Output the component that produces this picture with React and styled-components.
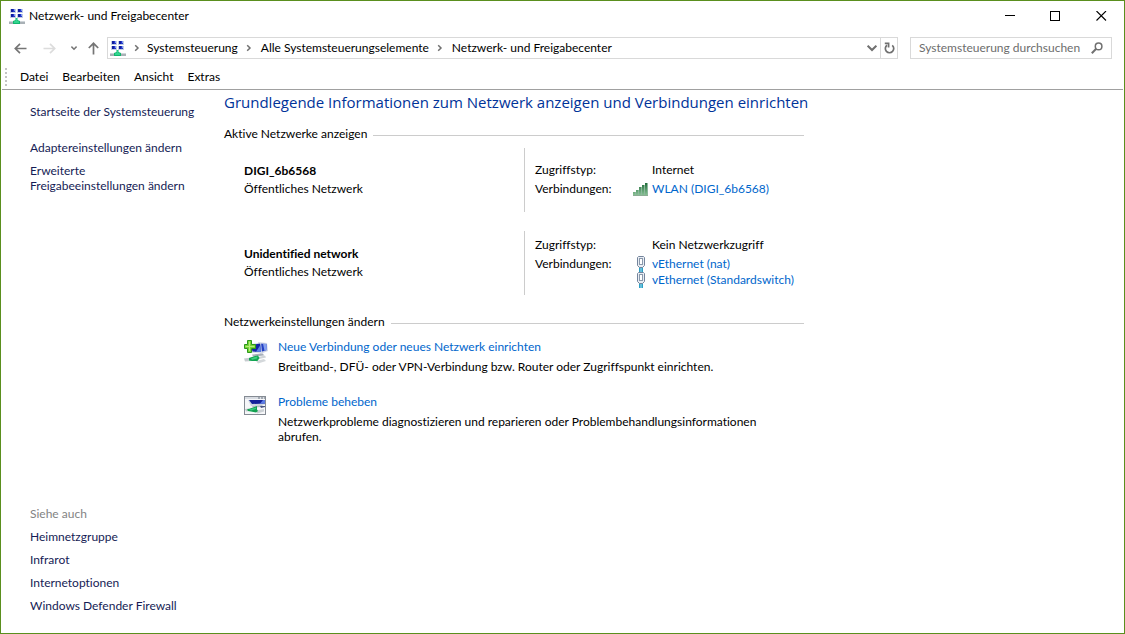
import React from 'react';
import styled, { createGlobalStyle } from 'styled-components';

const GlobalStyle = createGlobalStyle`
  *, *::before, *::after { box-sizing: border-box; }
  body {
    margin: 0;
    background: #fff;
    color: #000;
    font: 12px/16px "Segoe UI", Lato, sans-serif;
    font-variant-ligatures: none;
  }
  button, input { font: inherit; color: inherit; }
  button { border: 0; padding: 0; background: none; }
  h1, h2, h3, p, ul, dl, dd { margin: 0; padding: 0; }
  ul { list-style: none; }
  svg { display: block; flex: none; }
`;

const Window = styled.div`
  min-height: 100vh;
  display: flex;
  flex-direction: column;
  border: 1px solid #5a8f1e;
`;

const TitleBar = styled.header`
  display: flex;
  align-items: center;
  height: 30px;
  padding-left: 8px;
`;

const WindowTitle = styled.span`
  flex: 1;
  padding-left: 4px;
`;

const CaptionButton = styled.button`
  width: 46px;
  height: 28px;
  display: flex;
  align-items: center;
  justify-content: center;
`;

const NavBar = styled.div`
  display: flex;
  align-items: center;
  height: 34px;
  padding: 0 12px 0 8px;
`;

const NavButton = styled.button`
  width: ${(p) => p.$width}px;
  height: 22px;
  display: flex;
  align-items: center;
  justify-content: center;
  color: ${(p) => (p.disabled ? '#dcdcdc' : '#757575')};
`;

const AddressBar = styled.nav`
  flex: 1;
  display: flex;
  align-items: center;
  height: 22px;
  padding-left: 2px;
  border: 1px solid #d9d9d9;
`;

const Separator = styled.span`
  display: flex;
  justify-content: center;
  width: ${(p) => p.$width || 23}px;
  color: #707070;
`;

const Spacer = styled.span`
  flex: 1;
`;

const AddressButton = styled.button`
  width: 17px;
  height: 20px;
  display: flex;
  align-items: center;
  justify-content: center;
  color: #707070;
  border-left: ${(p) => (p.$divided ? '1px solid #d9d9d9' : '0')};
`;

const SearchBox = styled.label`
  display: flex;
  align-items: center;
  width: 202px;
  height: 22px;
  margin-left: 12px;
  padding: 0 8px;
  border: 1px solid #d9d9d9;
  color: #707070;
`;

const SearchInput = styled.input`
  flex: 1;
  min-width: 0;
  padding: 0;
  border: 0;
  outline: 0;
  background: none;
  &::placeholder { color: #6d6d6d; opacity: 1; }
`;

const MenuBar = styled.div`
  display: flex;
  align-items: center;
  height: 25px;
  margin: 0 1px;
  padding-left: 3px;
  border-bottom: 1px solid #a0a0a0;
`;

const Grip = styled.span`
  width: 2px;
  height: 18px;
  margin-right: 6px;
  background: repeating-linear-gradient(#c4c4c4 0 2px, #fff 2px 4px);
`;

const MenuButton = styled.button`
  padding: 0 7px;
`;

const Content = styled.div`
  flex: 1;
  display: flex;
`;

const Sidebar = styled.aside`
  width: 223px;
  flex: none;
  display: flex;
  flex-direction: column;
  justify-content: space-between;
  padding: 14px 24px 20px 29px;
  line-height: 15px;
`;

const LinkList = styled.ul`
  display: flex;
  flex-direction: column;
  gap: 8px;
`;

const SideItem = styled.li`
  margin-bottom: ${(p) => (p.$spaced ? '13px' : '0')};
`;

const SideLink = styled.a`
  color: #151c55;
  text-decoration: none;
`;

const SideCaption = styled.h3`
  font-size: 12px;
  font-weight: 400;
  color: #838383;
  margin-bottom: 8px;
`;

const Main = styled.main`
  flex: 1;
  max-width: 580px;
  padding-top: 2px;
`;

const Heading = styled.h1`
  font-family: "Segoe UI", "Open Sans", sans-serif;
  font-size: 15px;
  line-height: 20px;
  font-weight: 400;
  color: #003399;
  white-space: nowrap;
`;

const Section = styled.section`
  margin-top: ${(p) => p.$gap}px;
`;

const SectionTitle = styled.h2`
  display: flex;
  align-items: center;
  gap: 6px;
  font-size: 12px;
  font-weight: 400;
  &::after {
    content: "";
    flex: 1;
    height: 1px;
    margin-top: 2px;
    background: #ccc;
  }
`;

const Networks = styled.div`
  display: flex;
  flex-direction: column;
  gap: 19px;
  margin-top: 6px;
`;

const Network = styled.article`
  display: flex;
  min-height: 64px;
`;

const Identity = styled.div`
  width: 300px;
  padding-left: 20px;
  display: flex;
  flex-direction: column;
  justify-content: center;
  line-height: 18px;
`;

const NetworkName = styled.h3`
  font-size: 12px;
  font-weight: 700;
`;

const Details = styled.dl`
  flex: 1;
  display: grid;
  grid-template-columns: 98px 1fr;
  row-gap: 3px;
  align-content: center;
  padding: 0 0 1px 10px;
  border-left: 1px solid #ccc;
`;

const AccessValue = styled.dd`
  padding-left: 19px;
`;

const Connection = styled.div`
  display: flex;
  align-items: center;
  gap: 3px;
  white-space: nowrap;
`;

const ActionLink = styled.a`
  color: #0066cc;
  text-decoration: none;
`;

const Tasks = styled.ul`
  display: flex;
  flex-direction: column;
  gap: 16px;
  margin-top: 9px;
`;

const Task = styled.li`
  display: flex;
  gap: 10px;
  padding-left: 19px;
  padding-right: 20px;
`;

const TaskText = styled.p`
  margin-top: 4px;
  line-height: 15px;
  padding-bottom: 4px;
`;

const Monitor = ({ x, y }) => (
  <g>
    <rect x={x} y={y} width="6" height="4" fill="#c3cfe2" />
    <rect x={x + 1} y={y} width="4" height="3" fill="#2438c8" />
    <rect x={x + 1} y={y} width="2" height="3" fill="#0f1da0" />
    <rect x={x + 4} y={y} width="1" height="2" fill="#7f9af0" />
  </g>
);

const NetworkIcon = () => (
  <svg width="16" height="17" viewBox="0 0 16 17" aria-hidden="true">
    <Monitor x={1} y={1} />
    <Monitor x={8} y={1} />
    <Monitor x={1} y={6} />
    <Monitor x={8} y={6} />
    <rect x="0" y="13" width="16" height="3" fill="#a9b1b6" />
    <rect x="0" y="13" width="16" height="1" fill="#cfd5d9" />
    <path d="M6.5 10H8.5V12L11 13V16H4V13L6.5 12Z" fill="#14b56e" />
    <path d="M7 10.5H8V12.5L10 13.5V15H5V13.5L7 12.5Z" fill="#30d68e" />
  </svg>
);

const ArrowIcon = ({ rotate }) => (
  <svg width="13" height="13" viewBox="0 0 13 13" fill="none" stroke="currentColor" strokeWidth="1.7" aria-hidden="true">
    <path transform={`rotate(${rotate} 6.5 6.5)`} d="M12.5 6.5H1.5M6 1.8L1.3 6.5L6 11.2" />
  </svg>
);

const ChevronDown = ({ size = 6, stroke = 1.5 }) => (
  <svg width={size} height={size} viewBox="0 0 6 6" fill="none" stroke="currentColor" strokeWidth={stroke} aria-hidden="true">
    <path d="M0.4 1.6L3 4.2L5.6 1.6" />
  </svg>
);

const ChevronRight = () => (
  <svg width="6" height="8" viewBox="0 0 6 8" fill="none" stroke="currentColor" strokeWidth="1.5" aria-hidden="true">
    <path d="M1.2 1.2L4 4L1.2 6.8" />
  </svg>
);

const RefreshIcon = () => (
  <svg width="11" height="12" viewBox="0 0 11 12" fill="none" stroke="currentColor" strokeWidth="1.7" aria-hidden="true">
    <path d="M3 3.2A4.2 4.2 0 1 0 8.2 3.3M0.8 1.4H4.6V5.4" />
  </svg>
);

const SearchIcon = () => (
  <svg width="12" height="12" viewBox="0 0 12 12" fill="none" stroke="currentColor" aria-hidden="true">
    <circle cx="7.6" cy="4.4" r="3.3" strokeWidth="1.5" />
    <path d="M5.2 6.8L0.8 11.2" strokeWidth="2" />
  </svg>
);

const MinimizeIcon = () => (
  <svg width="11" height="11" viewBox="0 0 11 11" aria-hidden="true">
    <path d="M1 4.5H11" stroke="#000" />
  </svg>
);

const MaximizeIcon = () => (
  <svg width="11" height="11" viewBox="0 0 11 11" aria-hidden="true">
    <rect x="0.5" y="0.5" width="9" height="9" fill="none" stroke="#000" />
  </svg>
);

const CloseIcon = () => (
  <svg width="11" height="11" viewBox="0 0 11 11" aria-hidden="true">
    <path d="M0.5 0L10 9.5M10 0L0.5 9.5" stroke="#000" strokeWidth="1.1" />
  </svg>
);

const bars = [
  { x: 0, h: 3 },
  { x: 3, h: 5 },
  { x: 6, h: 8 },
  { x: 9, h: 10 },
  { x: 12, h: 12 },
];

const SignalIcon = () => (
  <svg width="16" height="13" viewBox="0 0 16 13" aria-hidden="true">
    <defs>
      <linearGradient id="signal" x1="0" y1="0" x2="0" y2="13" gradientUnits="userSpaceOnUse">
        <stop offset="0" stopColor="#1f6b3a" />
        <stop offset="1" stopColor="#8fc79a" />
      </linearGradient>
    </defs>
    {bars.map((b) => (
      <g key={b.x}>
        <rect x={b.x} y={12 - b.h} width="3" height={b.h} fill="#2f7d4c" opacity="0.55" />
        <rect x={b.x} y={12 - b.h} width="2" height={b.h} fill="url(#signal)" />
      </g>
    ))}
    <path d="M0 12.5H15" stroke="#5b8a66" opacity="0.7" />
  </svg>
);

const EthernetIcon = () => (
  <svg width="16" height="16" viewBox="0 0 16 16" aria-hidden="true">
    <rect x="6" y="11" width="4" height="5" fill="#2d9fc4" />
    <rect x="7.5" y="12" width="1" height="4" fill="#9be0f2" />
    <path d="M4.5 1.5L5.5 0.5H10.5L11.5 1.5V9.5L9.5 11.5H6.5L4.5 9.5Z" fill="#e8edf3" stroke="#74849c" />
    <rect x="6.5" y="2.5" width="3" height="6" fill="#fff" stroke="#8b99ac" />
  </svg>
);

const NewConnectionIcon = () => (
  <svg width="25" height="26" viewBox="0 0 25 26" aria-hidden="true">
    <path d="M15 3L24 4L25 12L17 15Z" fill="#d0d6e4" />
    <path d="M16 4.5L23.5 5L24 11L17.5 13Z" fill="#2340c4" />
    <path d="M20 4.8L23.5 5L24 11L21.5 11.8Z" fill="#86a0ee" />
    <path d="M7 5L18 3.5L19 14.5L9 14Z" fill="#d9dfea" />
    <path d="M8 6L17.2 4.5L18 13L9.5 12.6Z" fill="#1426a8" />
    <path d="M13 12.8L17.4 6L18 13Z" fill="#5c80e4" />
    <path d="M9 15.5L20 14.5L21 16.5L10 17.5Z" fill="#a8b0ba" />
    <path d="M1 19.5L9 18.5V22L2 22.5Z" fill="#c6cccf" />
    <path d="M15 18L22 16.5L23 18.5L16 20Z" fill="#cfd4d7" />
    <path d="M13 22L21 20L23 22L15 24.5Z" fill="#d4d8db" />
    <path d="M6 19L12 17L15 16.5L16.5 19L14.5 22L9 22L6 21.5Z" fill="#12a552" />
    <path d="M8 19.5L12 18L14.5 17.5L14 19.5L9 20.8Z" fill="#42cf82" />
    <path d="M4.5 1.5H8.5V5.5H12.5V9.5H8.5V13.5H4.5V9.5H1.5V5.5H4.5Z" fill="#79d336" stroke="#2c981c" />
    <path d="M6.5 2.5V12M2.5 7.5H11.5" stroke="#b3f07a" />
  </svg>
);

const TroubleshootIcon = () => (
  <svg width="25" height="26" viewBox="0 0 25 26" aria-hidden="true">
    <rect x="1.5" y="2.5" width="21" height="18" fill="#f6f7f9" stroke="#858b93" />
    <rect x="2" y="3" width="20" height="2" fill="#d8dce2" />
    <path d="M15 4H22" stroke="#6d7682" strokeDasharray="2 1" />
    <path d="M5 6H22V10.5L8 12Z" fill="#ccd3e0" />
    <path d="M6 6H22V9.5L9 10Z" fill="#14219a" />
    <path d="M17 9.7L20 6H22V9.5Z" fill="#5c7ce4" />
    <path d="M9 12L20 11L18 13L10 13.5Z" fill="#b3bac4" />
    <path d="M17 12H22V13L18 14Z" fill="#4a5580" />
    <path d="M2 15L6 14.5V17L3 17.5Z" fill="#c2c8cc" />
    <path d="M13 16.5L21 15V17.5L14 19.5Z" fill="#cbd0d4" />
    <path d="M4 15.5L10 13.5L14 12V15.5L15 17L13 18.5L8 17.5L5 17Z" fill="#12a04f" />
    <path d="M6 15.5L13 13.5V15L8 16.5Z" fill="#3ccb80" />
  </svg>
);

const crumbs = ['Systemsteuerung', 'Alle Systemsteuerungselemente', 'Netzwerk- und Freigabecenter'];
const menus = ['Datei', 'Bearbeiten', 'Ansicht', 'Extras'];
const sideTasks = ['Startseite der Systemsteuerung', 'Adaptereinstellungen ändern', 'Erweiterte Freigabeeinstellungen ändern'];
const seeAlso = ['Heimnetzgruppe', 'Infrarot', 'Internetoptionen', 'Windows Defender Firewall'];
const networks = [
  {
    name: 'DIGI_6b6568',
    type: 'Öffentliches Netzwerk',
    access: 'Internet',
    Icon: SignalIcon,
    connections: ['WLAN (DIGI_6b6568)'],
  },
  {
    name: 'Unidentified network',
    type: 'Öffentliches Netzwerk',
    access: 'Kein Netzwerkzugriff',
    Icon: EthernetIcon,
    connections: ['vEthernet (nat)', 'vEthernet (Standardswitch)'],
  },
];
const tasks = [
  {
    title: 'Neue Verbindung oder neues Netzwerk einrichten',
    text: 'Breitband-, DFÜ- oder VPN-Verbindung bzw. Router oder Zugriffspunkt einrichten.',
    Icon: NewConnectionIcon,
  },
  {
    title: 'Probleme beheben',
    text: 'Netzwerkprobleme diagnostizieren und reparieren oder Problembehandlungsinformationen abrufen.',
    Icon: TroubleshootIcon,
  },
];

export default function App() {
  return (
    <>
      <GlobalStyle />
      <Window>
        <TitleBar>
          <NetworkIcon />
          <WindowTitle>Netzwerk- und Freigabecenter</WindowTitle>
          <CaptionButton aria-label="Minimieren"><MinimizeIcon /></CaptionButton>
          <CaptionButton aria-label="Maximieren"><MaximizeIcon /></CaptionButton>
          <CaptionButton aria-label="Schließen"><CloseIcon /></CaptionButton>
        </TitleBar>

        <NavBar>
          <NavButton $width={23} aria-label="Zurück"><ArrowIcon rotate={0} /></NavButton>
          <NavButton $width={35} aria-label="Vorwärts" disabled><ArrowIcon rotate={180} /></NavButton>
          <NavButton $width={13} aria-label="Zuletzt besucht"><ChevronDown /></NavButton>
          <NavButton $width={27} aria-label="Nach oben"><ArrowIcon rotate={90} /></NavButton>
          <AddressBar aria-label="Adresse">
            <NetworkIcon />
            {crumbs.map((c, i) => (
              <React.Fragment key={c}>
                <Separator $width={i === 0 ? 21 : 23}><ChevronRight /></Separator>
                <button>{c}</button>
              </React.Fragment>
            ))}
            <Spacer />
            <AddressButton aria-label="Verlauf"><ChevronDown size={10} stroke={1.2} /></AddressButton>
            <AddressButton $divided aria-label="Aktualisieren"><RefreshIcon /></AddressButton>
          </AddressBar>
          <SearchBox>
            <SearchInput type="text" aria-label="Systemsteuerung durchsuchen" placeholder="Systemsteuerung durchsuchen" />
            <SearchIcon />
          </SearchBox>
        </NavBar>

        <MenuBar>
          <Grip />
          {menus.map((m) => <MenuButton key={m}>{m}</MenuButton>)}
        </MenuBar>

        <Content>
          <Sidebar>
            <LinkList>
              {sideTasks.map((t, i) => (
                <SideItem key={t} $spaced={i === 0}><SideLink href="#">{t}</SideLink></SideItem>
              ))}
            </LinkList>
            <div>
              <SideCaption>Siehe auch</SideCaption>
              <LinkList>
                {seeAlso.map((t) => (
                  <SideItem key={t}><SideLink href="#">{t}</SideLink></SideItem>
                ))}
              </LinkList>
            </div>
          </Sidebar>

          <Main>
            <Heading>Grundlegende Informationen zum Netzwerk anzeigen und Verbindungen einrichten</Heading>
            <Section $gap={14}>
              <SectionTitle>Aktive Netzwerke anzeigen</SectionTitle>
              <Networks>
                {networks.map(({ name, type, access, Icon, connections }) => (
                  <Network key={name}>
                    <Identity>
                      <NetworkName>{name}</NetworkName>
                      <p>{type}</p>
                    </Identity>
                    <Details>
                      <dt>Zugriffstyp:</dt>
                      <AccessValue>{access}</AccessValue>
                      <dt>Verbindungen:</dt>
                      <dd>
                        {connections.map((c) => (
                          <Connection key={c}><Icon /><ActionLink href="#">{c}</ActionLink></Connection>
                        ))}
                      </dd>
                    </Details>
                  </Network>
                ))}
              </Networks>
            </Section>

            <Section $gap={19}>
              <SectionTitle>Netzwerkeinstellungen ändern</SectionTitle>
              <Tasks>
                {tasks.map(({ title, text, Icon }) => (
                  <Task key={title}>
                    <Icon />
                    <div>
                      <ActionLink href="#">{title}</ActionLink>
                      <TaskText>{text}</TaskText>
                    </div>
                  </Task>
                ))}
              </Tasks>
            </Section>
          </Main>
        </Content>
      </Window>
    </>
  );
}
